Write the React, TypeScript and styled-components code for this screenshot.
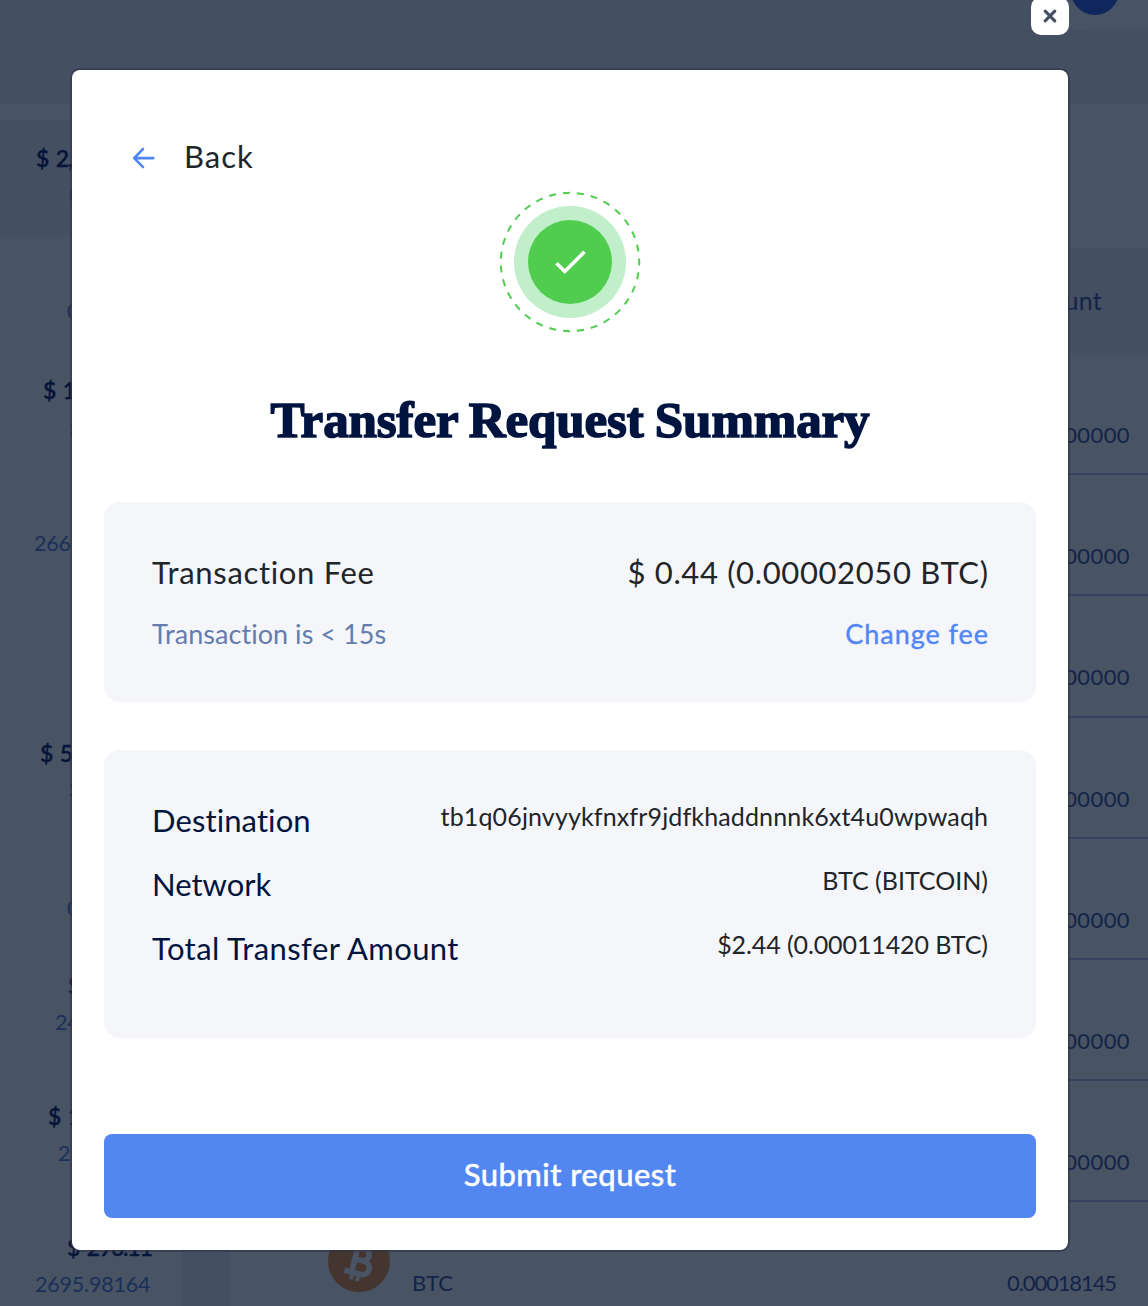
import React from "react";
import styled, { createGlobalStyle } from "styled-components";

const Global = createGlobalStyle`
  * { box-sizing: border-box; }
  body {
    margin: 0;
    background: #485364;
    font-family: Lato, "Open Sans", sans-serif;
    font-variant-ligatures: none;
  }
`;

const Screen = styled.div`
  position: relative;
  width: 1148px;
  height: 1306px;
  overflow: hidden;
  background: #485364;
`;
const Page = styled.div`
  display: flex;
  flex-direction: column;
  height: 100%;
`;
const TopBar = styled.header`
  flex: none;
  height: 104px;
  display: flex;
  justify-content: flex-end;
  align-items: flex-start;
  background: #454f62;
`;
const Account = styled.div`
  width: 98px;
  height: 31px;
  padding-left: 21px;
  border-bottom-left-radius: 40px 34px;
  background: #485364;
`;
const Avatar = styled.div`
  width: 48px;
  height: 48px;
  margin-top: -33px;
  border-radius: 50%;
  background: #10275d;
`;
const Columns = styled.div`
  flex: 1;
  min-height: 0;
  display: flex;
`;
const Sidebar = styled.aside`
  width: 182px;
  padding-top: 16px;
`;
const Asset = styled.div<{ $h: number; $active?: boolean }>`
  height: ${(p) => p.$h}px;
  padding-bottom: 2px;
  display: flex;
  flex-direction: column;
  justify-content: center;
  background: ${(p) => (p.$active ? "#454f62" : "transparent")};
`;
const AssetLine = styled.div<{ $left: number; $strong?: boolean }>`
  height: 37.5px;
  line-height: 37.5px;
  padding-left: ${(p) => p.$left}px;
  font-size: ${(p) => (p.$strong ? 23 : 21.5)}px;
  font-weight: ${(p) => (p.$strong ? 600 : 400)};
  letter-spacing: ${(p) => (p.$strong ? -1.2 : -0.2)}px;
  word-spacing: ${(p) => (p.$strong ? 3 : 0)}px;
  white-space: nowrap;
  color: ${(p) => (p.$strong ? "#051438" : "#1b3058")};
  -webkit-text-stroke: ${(p) => (p.$strong ? 0.3 : 0)}px #051438;
`;
const Gutter = styled.div`
  width: 48px;
  background: #454f62;
`;
const Main = styled.main`
  flex: 1;
  padding-top: 144px;
`;
const TableHead = styled.div`
  height: 105px;
  padding: 0 46px 1px 0;
  display: flex;
  justify-content: flex-end;
  align-items: center;
  background: #454f62;
  color: #142448;
  font-size: 25px;
  letter-spacing: 0.3px;
`;
const TableRow = styled.div`
  height: 121.2px;
  padding: 65px 18px 0 0;
  display: flex;
  justify-content: flex-end;
  box-shadow: 0 1px 0 #35425f, inset 0 -1px 0 #35425f;
  color: #142448;
  font-size: 22px;
  line-height: 34px;
  letter-spacing: 0.4px;
`;
const CoinRow = styled(TableRow)`
  padding: 26px 32px 0 98px;
  justify-content: flex-start;
  box-shadow: none;
  letter-spacing: 0;
  span { margin: 39px 0 0 22px; }
  span:last-child { margin-left: auto; letter-spacing: -1.1px; }
`;
const CoinIcon = styled.svg`
  flex: none;
  width: 62px;
  height: 62px;
  margin-top: 3px;
`;

const Overlay = styled.div`
  position: absolute;
  inset: 0;
`;
const Close = styled.button`
  position: absolute;
  left: 1031px;
  top: -3px;
  width: 38px;
  height: 38px;
  padding: 0;
  border: 0;
  border-radius: 10px;
  background: #fff;
  display: flex;
  align-items: center;
  justify-content: center;
`;
const Dialog = styled.section`
  position: absolute;
  left: 72px;
  top: 70px;
  width: 996px;
  height: 1180px;
  padding: 65px 32px 32px;
  display: flex;
  flex-direction: column;
  border-radius: 8px;
  background: #fff;
  box-shadow: 0 0 0 2px rgba(48, 52, 74, 0.6);
`;
const Back = styled.button`
  display: flex;
  align-items: center;
  gap: 29px;
  height: 42px;
  padding: 0 0 0 28px;
  border: 0;
  background: none;
  color: #212529;
  font: 400 31px/42px Lato, sans-serif;
  letter-spacing: 1px;
  svg { margin-top: 4px; }
`;
const Status = styled.svg`
  align-self: center;
  flex: none;
  width: 144px;
  height: 144px;
  margin-top: 13px;
`;
const Title = styled.h1`
  margin: 53px 0 0;
  height: 67px;
  text-align: center;
  white-space: nowrap;
  color: #001440;
  font: 700 51px/66px "Liberation Serif", serif;
  letter-spacing: -0.1px;
  word-spacing: -1.5px;
  -webkit-text-stroke: 1.6px #001440;
`;
const Card = styled.div<{ $h: number; $gap: number }>`
  height: ${(p) => p.$h}px;
  margin-top: ${(p) => p.$gap}px;
  padding: 45px 48px 0;
  border-radius: 16px;
  background: #f5f6fa;
`;
const Row = styled.div<{ $h?: number }>`
  height: ${(p) => p.$h ?? 64}px;
  display: flex;
  justify-content: space-between;
  white-space: nowrap;
`;
const Text = styled.span<{ $size: number; $color: string; $ls?: number; $lh?: number; $stroke?: number }>`
  font-size: ${(p) => p.$size}px;
  line-height: ${(p) => p.$lh ?? 50}px;
  color: ${(p) => p.$color};
  letter-spacing: ${(p) => p.$ls ?? 0}px;
  margin-right: ${(p) => -(p.$ls ?? 0)}px;
  -webkit-text-stroke: ${(p) => p.$stroke ?? 0}px ${(p) => p.$color};
`;
const Submit = styled.button`
  height: 84px;
  margin-top: auto;
  padding: 0 0 4px;
  border: 0;
  border-radius: 8px;
  background: #5286f0;
  color: #fff;
  font: 400 31px/40px Lato, sans-serif;
  letter-spacing: 0.5px;
  -webkit-text-stroke: 0.6px #fff;
`;

type Line = [string, number] | null;
const assets: { h: number; value: Line; amount: Line }[] = [
  { h: 116, value: ["$ 2,", 36], amount: ["0", 69] },
  { h: 116, value: null, amount: ["0", 67] },
  { h: 116, value: ["$ 1", 43], amount: ["5", 69] },
  { h: 116, value: null, amount: ["266", 34] },
  { h: 121, value: null, amount: ["7", 70] },
  { h: 136, value: ["$ 5", 40], amount: ["3", 69] },
  { h: 99, value: null, amount: ["0", 67] },
  { h: 130, value: ["$", 68], amount: ["24", 55] },
  { h: 132, value: ["$ 1", 48], amount: ["2", 58] },
  { h: 130, value: ["$ 296.11", 67], amount: ["2695.98164", 35] },
];

export default function App() {
  return (
    <Screen>
      <Global />
      <Page>
        <TopBar>
          <Account><Avatar /></Account>
        </TopBar>
        <Columns>
          <Sidebar>
            {assets.map((a, i) => (
              <Asset key={i} $h={a.h} $active={i === 0}>
                <AssetLine $strong $left={a.value?.[1] ?? 0}>{a.value?.[0]}</AssetLine>
                <AssetLine $left={a.amount?.[1] ?? 0}>{a.amount?.[0]}</AssetLine>
              </Asset>
            ))}
          </Sidebar>
          <Gutter />
          <Main>
            <TableHead>Amount</TableHead>
            {Array.from({ length: 7 }, (_, i) => <TableRow key={i}>00000</TableRow>)}
            <CoinRow>
              <CoinIcon viewBox="0 0 62 62">
                <circle cx="31" cy="31" r="31" fill="#45352f" />
                <g transform="rotate(14 31 31)" fill="none" stroke="#485364" strokeWidth="5.6">
                  <path d="M20 18H33.5a6 6 0 0 1 0 12H26M33.5 30h2.5a6.8 6.8 0 0 1 0 13.6H19M26.5 18V43.6" />
                  <path d="M27.5 11v7M34 11v7M27.5 43v8M34 43v8" strokeWidth="4" />
                </g>
              </CoinIcon>
              <span>BTC</span>
              <span>0.00018145</span>
            </CoinRow>
          </Main>
        </Columns>
      </Page>

      <Overlay>
        <Close aria-label="Close">
          <svg width="14" height="14" viewBox="0 0 14 14" stroke="#454f62" strokeWidth="3.1" strokeLinecap="round">
            <path d="M2.2 2.2l9.6 9.6M11.8 2.2l-9.6 9.6" />
          </svg>
        </Close>
        <Dialog>
          <Back>
            <svg width="23" height="22" viewBox="0 0 23 22" fill="none" stroke="#5286f0" strokeWidth="2.6" strokeLinecap="round" strokeLinejoin="round">
              <path d="M21.3 11.1H2.2M11 2L2.2 11.1l8.8 9" />
            </svg>
            Back
          </Back>
          <Status viewBox="0 0 144 144">
            <circle cx="72" cy="72" r="69.2" fill="none" stroke="#50cd4f" strokeWidth="2" strokeDasharray="7 7" strokeDashoffset="3.5" />
            <circle cx="72" cy="72" r="56" fill="#c0efca" />
            <circle cx="72" cy="72" r="42" fill="#50cd4f" />
            <path d="M58.5 73.3L66.8 81.5L86.5 61.8" fill="none" stroke="#fff" strokeWidth="3.6" />
          </Status>
          <Title>Transfer Request Summary</Title>
          <Card $h={200} $gap={48}>
            <Row $h={62}>
              <Text $size={31} $color="#212529" $ls={0.67}>Transaction Fee</Text>
              <Text $size={31} $color="#212529" $ls={0.64}>$ 0.44 (0.00002050 BTC)</Text>
            </Row>
            <Row $h={62}>
              <Text $size={27} $color="#647dae" $ls={0.05}>{"Transaction is < 15s"}</Text>
              <Text $size={27} $color="#5286f6" $ls={0.95} $stroke={0.4}>Change fee</Text>
            </Row>
          </Card>
          <Card $h={288} $gap={48}>
            <Row>
              <Text $size={31} $color="#001440" $ls={0.1}>Destination</Text>
              <Text $size={25} $color="#212529" $lh={42} $ls={0.14}>tb1q06jnvyykfnxfr9jdfkhaddnnnk6xt4u0wpwaqh</Text>
            </Row>
            <Row>
              <Text $size={31} $color="#001440">Network</Text>
              <Text $size={25} $color="#212529" $lh={42}>BTC (BITCOIN)</Text>
            </Row>
            <Row>
              <Text $size={31} $color="#001440" $ls={0.4}>Total Transfer Amount</Text>
              <Text $size={25} $color="#212529" $lh={42} $ls={-0.1}>$2.44 (0.00011420 BTC)</Text>
            </Row>
          </Card>
          <Submit>Submit request</Submit>
        </Dialog>
      </Overlay>
    </Screen>
  );
}
